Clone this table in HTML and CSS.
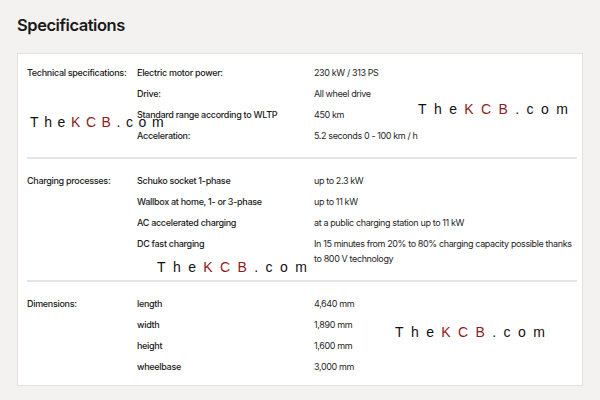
FILE: index.html
```html
<!DOCTYPE html>
<html lang="en">
<head>
<meta charset="utf-8">
<title>Specifications</title>
<link rel="stylesheet" href="styles.css">
</head>
<body>
<div class="page">
  <h1 class="title">Specifications</h1>
  <div class="card">
    <section class="group">
      <div class="label">Technical specifications:</div>
      <div class="rows">
        <div class="row"><span class="key">Electric motor power:</span><span class="val">230 kW / 313 PS</span></div>
        <div class="row"><span class="key">Drive:</span><span class="val">All wheel drive</span></div>
        <div class="row"><span class="key">Standard range according to WLTP</span><span class="val">450 km</span></div>
        <div class="row"><span class="key">Acceleration:</span><span class="val">5.2 seconds 0 - 100 km / h</span></div>
      </div>
    </section>
    <section class="group">
      <div class="label">Charging processes:</div>
      <div class="rows">
        <div class="row"><span class="key">Schuko socket 1-phase</span><span class="val">up to 2.3 kW</span></div>
        <div class="row"><span class="key">Wallbox at home, 1- or 3-phase</span><span class="val">up to 11 kW</span></div>
        <div class="row"><span class="key">AC accelerated charging</span><span class="val">at a public charging station up to 11 kW</span></div>
        <div class="row"><span class="key">DC fast charging</span><span class="val">In 15 minutes from 20% to 80% charging capacity possible thanks to 800 V technology</span></div>
      </div>
    </section>
    <section class="group">
      <div class="label">Dimensions:</div>
      <div class="rows">
        <div class="row"><span class="key">length</span><span class="val">4,640 mm</span></div>
        <div class="row"><span class="key">width</span><span class="val">1,890 mm</span></div>
        <div class="row"><span class="key">height</span><span class="val">1,600 mm</span></div>
        <div class="row"><span class="key">wheelbase</span><span class="val">3,000 mm</span></div>
      </div>
    </section>
  </div>
  <div class="wm wm1">The<b>KCB</b>.com</div>
  <div class="wm wm2">The<b>KCB</b>.com</div>
  <div class="wm wm3">The<b>KCB</b>.com</div>
  <div class="wm wm4">The<b>KCB</b>.com</div>
</div>
</body>
</html>
```

FILE: styles.css
```css
html, body {
  margin: 0;
  padding: 0;
  background: #f4f2f0;
}
body {
  font-family: "Inter", "Lato", sans-serif;
  color: #1a1a1a;
}
.page {
  position: relative;
  width: 600px;
  height: 400px;
  padding: 0 17px 0 17px;
  box-sizing: border-box;
  overflow: hidden;
}
.title {
  margin: 0;
  padding-top: 14px;
  height: 53px;
  box-sizing: border-box;
  font-size: 16.5px;
  font-weight: 600;
  letter-spacing: -0.45px;
  color: #1a1a1a;
  line-height: 22px;
}
.card {
  background: #fff;
  border: 1px solid #e4e1de;
  width: 566px;
  box-sizing: border-box;
  padding: 0 0 0 9px;
}
.group {
  display: flex;
  padding: 11px 0 11px 0;
  border-bottom: 2px solid #e6e4e2;
  margin-right: 5px;
}
.group:first-child { padding-top: 8px; }
.group:last-child { border-bottom: none; padding-bottom: 8px; }
.label {
  width: 110px;
  flex: none;
  font-size: 9px;
  font-weight: 500;
  letter-spacing: -0.3px;
  line-height: 15px;
  padding-top: 3px;
}
.rows { flex: 1; }
.row {
  display: flex;
  padding: 3px 0;
  font-size: 9px;
  line-height: 15px;
  letter-spacing: -0.3px;
}
.key {
  width: 177px;
  flex: none;
  font-weight: 500;
}
.val {
  flex: 1;
  font-weight: 400;
  color: #262626;
  letter-spacing: -0.38px;
}
.wm {
  position: absolute;
  font-family: "Liberation Sans", Arial, sans-serif;
  font-size: 14px;
  letter-spacing: 7.4px;
  color: #111;
  white-space: nowrap;
  line-height: 16px;
}
.wm b {
  font-weight: 400;
  color: #8b1c24;
}
.wm1 { left: 30px; top: 114px; letter-spacing: 5.6px; }
.wm2 { left: 418px; top: 101px; }
.wm3 { left: 157px; top: 259px; }
.wm4 { left: 395px; top: 324px; }
```
